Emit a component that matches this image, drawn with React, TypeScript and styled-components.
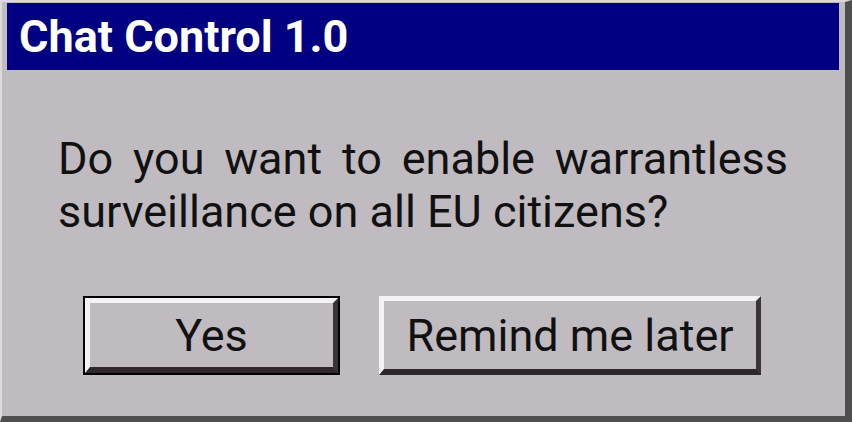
import React from 'react'
import styled, { createGlobalStyle } from 'styled-components'

const GlobalStyle = createGlobalStyle`
  html, body {
    margin: 0;
    padding: 0;
    background: #c0bbc0;
  }
  * {
    box-sizing: border-box;
  }
`

export default function App(): JSX.Element {
  return (
    <>
      <GlobalStyle />
      <DialogWindow>
        <TitleBar>Chat Control 1.0</TitleBar>
        <DialogBody>
          <Message>
            Do you want to enable warrantless surveillance on all EU citizens?
          </Message>
          <ButtonRow>
            <DialogButton $default $width={253}>
              Yes
            </DialogButton>
            <DialogButton $width={382}>Remind me later</DialogButton>
          </ButtonRow>
        </DialogBody>
      </DialogWindow>
    </>
  )
}

const DialogWindow = styled.div`
  display: flex;
  flex-direction: column;
  width: 852px;
  height: 422px;
  padding: 1px 6px 0 5px;
  background: #c0bbc0;
  border-style: solid;
  border-width: 2px 7px 6px 2px;
  border-color: #dcd8dc #4e4e4e #4e4e4e #dcd8dc;
  font-family: Roboto, 'Liberation Sans', sans-serif;
`

const TitleBar = styled.div`
  height: 67px;
  padding: 0 12px;
  display: flex;
  align-items: center;
  background: #000080;
  color: #ffffff;
  font-size: 45px;
  font-weight: 700;
`

const DialogBody = styled.div`
  flex: 1;
  display: flex;
  flex-direction: column;
  padding: 62px 51px 0 51px;
`

const Message = styled.p`
  margin: 0;
  font-size: 45px;
  line-height: 53px;
  color: #111;
  text-align: justify;
`

const ButtonRow = styled.div`
  display: flex;
  justify-content: center;
  gap: 41px;
  margin-top: 58px;
`

const DialogButton = styled.button<{ $default?: boolean; $width: number }>`
  width: ${({ $width }) => $width}px;
  height: ${({ $default }) => ($default ? 75 : 79)}px;
  padding: 0;
  background: #c0bbc0;
  border-style: solid;
  border-width: 5px 5px 6px 5px;
  border-color: #f4f2f4 #3a343a #2e282e #f4f2f4;
  box-shadow: ${({ $default }) => ($default ? '0 0 0 2px #000' : 'none')};
  ${({ $default }) => ($default ? 'margin: 2px 0;' : '')}
  font-family: Roboto, 'Liberation Sans', sans-serif;
  font-size: 45px;
  color: #111;
`
